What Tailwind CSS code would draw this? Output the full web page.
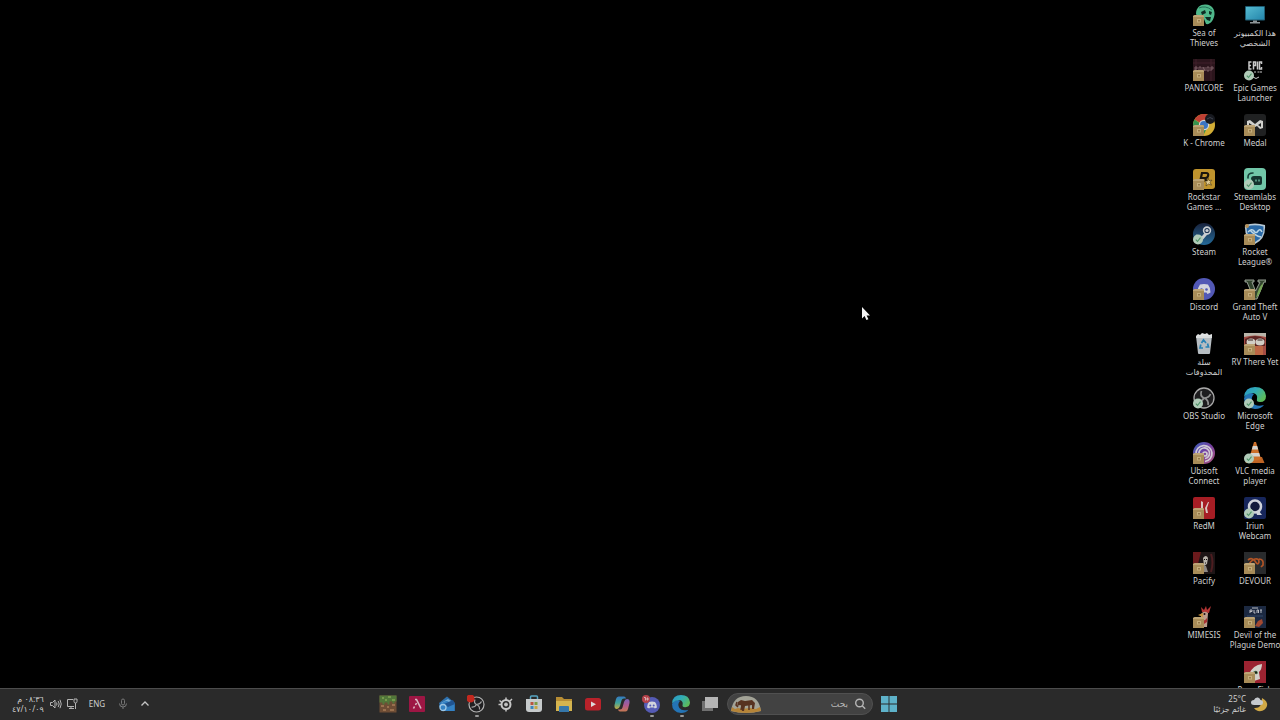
<!DOCTYPE html>
<html lang="en">
<head>
  <meta charset="UTF-8">
  <meta name="viewport" content="width=device-width, initial-scale=1.0">
  <title>Desktop</title>
  <script src="https://cdn.jsdelivr.net/npm/@tailwindcss/browser@4"></script>
</head>
<body class="bg-black text-[#cfcfcf] font-['Noto_Sans','DejaVu_Sans',sans-serif]">

  <!-- shared badges -->
  <svg class="hidden" aria-hidden="true">
    <symbol id="box" viewBox="0 0 22 22">
      <path d="M0 12l2-1h8l1 1v10H0z" fill="#a88c58"/>
      <path d="M0 12l2-1h8l1 1v1H0z" fill="#bda475"/>
      <rect x="4" y="15" width="4" height="3.500" fill="#c6af7c"/>
      <rect x="5" y="16" width="2" height="1.500" fill="#947748"/>
    </symbol>
    <symbol id="check" viewBox="0 0 22 22">
      <circle cx="5" cy="16.500" r="5" fill="#b0cbb8"/>
      <path d="M2.800 16.700l1.700 1.800 3-3.800" fill="none" stroke="#4d9468" stroke-width="1.100"/>
    </symbol>
  </svg>

  <div class="flex h-screen flex-col">
    <main class="relative flex min-h-0 flex-1 justify-end overflow-hidden">
      <!-- last row runs under the taskbar -->
      <div class="grid h-[calc(100%+24px)] shrink-0 grid-cols-[50px_50px] grid-rows-13 gap-x-px text-[8px] leading-[10px]">

        <button class="flex min-h-0 flex-col items-center gap-0.5 pt-1">
          <svg class="size-[22px] shrink-0" viewBox="0 0 22 22">
            <path d="M3 10C3 3 8 0 13 0.5c6 .5 9 5 8.500 10C21 16 17 21 13 20l-2-5-6-1z" fill="#4fb88a"/>
            <path d="M8 8l4-2 1 3-4 2zM16 7l3 1-1 3-2-1zM12 13l6 0-1 4-3-1z" fill="#0d2b22"/>
            <path d="M6 4q6-3 13 2" stroke="#237056" fill="none"/>
            <use href="#box"/>
          </svg>
          <span>Sea of<br>Thieves</span>
        </button>
        <button class="flex min-h-0 flex-col items-center gap-0.5 pt-1">
          <svg class="size-[22px] shrink-0" viewBox="0 0 22 22">
            <defs><linearGradient id="pc" x2="1" y2="1"><stop stop-color="#55bad0"/><stop offset="1" stop-color="#2486ac"/></linearGradient></defs>
            <rect x="1" y="2" width="20" height="14.500" rx="1" fill="#1f5d74"/>
            <rect x="2" y="3" width="18" height="12.500" fill="url(#pc)"/>
            <path d="M9 16.500h4V18h3v1.500H6V18h3z" fill="#8d9496"/>
          </svg>
          <span dir="rtl" class="whitespace-nowrap">هذا الكمبيوتر<br>الشخصي</span>
        </button>

        <button class="flex min-h-0 flex-col items-center gap-0.5 pt-1">
          <svg class="size-[22px] shrink-0" viewBox="0 0 22 22">
            <rect width="22" height="22" fill="#2b151c"/>
            <path d="M0 4h22M3 0v22M18 0v22" stroke="#41202a"/>
            <path d="M2 12V8h2v2H2M6 12V8h2v4M10 12V8l2 4V8M14 8h2v4h-2zM18 12V8h2v2h-2" stroke="#8c6d73" fill="none" stroke-width=".8"/>
            <use href="#box"/>
          </svg>
          <span>PANICORE</span>
        </button>
        <button class="flex min-h-0 flex-col items-center gap-0.5 pt-1">
          <svg class="size-[22px] shrink-0" viewBox="0 0 22 22">
            <g fill="none" stroke="#c9c9c9" stroke-width="1.500">
              <path d="M7.500 3H5v7h2.500M5 6.500h2M9.500 10.500V3h2v3.500h-2M13.500 2.500v8M17.500 5V3h-2v7h2V8"/>
              <path d="M10 13h2M13.500 13h2M16 13h2" stroke-width="1.200"/>
              <path d="M9 18l3 1.500 3-1.500" stroke-width="1"/>
            </g>
            <use href="#check"/>
          </svg>
          <span>Epic Games<br>Launcher</span>
        </button>

        <button class="flex min-h-0 flex-col items-center gap-0.5 pt-1">
          <svg class="size-[22px] shrink-0" viewBox="0 0 22 22">
            <circle cx="11" cy="11" r="11" fill="#d2ad35"/>
            <path d="M11 11L1.500 5.500A11 11 0 0 1 20.500 5.500z" fill="#bf4034"/>
            <path d="M1.500 5.500A11 11 0 0 0 10 22l4-8z" fill="#36924e"/>
            <circle cx="11" cy="11" r="5.200" fill="#d5d5d5"/>
            <circle cx="11" cy="11" r="4" fill="#3c75c3"/>
            <circle cx="17" cy="5" r="5" fill="#17191f"/>
            <path d="M14 5q3-3 6 0" stroke="#3e434e" fill="none"/>
            <use href="#box"/>
          </svg>
          <span class="whitespace-nowrap">K - Chrome</span>
        </button>
        <button class="flex min-h-0 flex-col items-center gap-0.5 pt-1">
          <svg class="size-[22px] shrink-0" viewBox="0 0 22 22">
            <rect width="22" height="22" rx="3" fill="#202122"/>
            <path d="M3 7l3-1 5 4 5-4 3 1v7l-3 1-3-3-2 1-2-1-3 3-3-1z" fill="#d0d0cc"/>
            <path d="M5 9l3 2-3 2zM17 9l-3 2 3 2z" fill="#202122"/>
            <use href="#box"/>
          </svg>
          <span>Medal</span>
        </button>

        <button class="flex min-h-0 flex-col items-center gap-0.5 pt-1">
          <svg class="size-[22px] shrink-0" viewBox="0 0 22 22">
            <rect y="1" width="22" height="20" rx="3" fill="#c0942d"/>
            <path d="M7 14L9 5h4q3 0 2 3-.5 2-3 2 1 1 1 4M8 10h4" fill="none" stroke="#19150d" stroke-width="2.200"/>
            <path d="M15 10l1 2.500 3-.3-2 2 1.500 3-3-1.200-2.500 2 .5-3-2-2h3z" fill="#dfcb94" stroke="#44330d" stroke-width=".6"/>
            <use href="#box"/>
          </svg>
          <span class="whitespace-nowrap">Rockstar<br>Games ...</span>
        </button>
        <button class="flex min-h-0 flex-col items-center gap-0.5 pt-1">
          <svg class="size-[22px] shrink-0" viewBox="0 0 22 22">
            <rect width="22" height="22" rx="4" fill="#71c6a8"/>
            <path d="M4 10V9q0-4 5-4" fill="none" stroke="#153e36" stroke-width="1.600" stroke-linecap="round"/>
            <path d="M7 11q0-3 3-3h6q2 0 2 2v5q0 2-2 2h-6q-2 0-2-2l1-1z" fill="#14332e"/>
            <path d="M12 11.500v2M15 11.500v2" stroke="#71c6a8" stroke-width="1.300"/>
            <use href="#check"/>
          </svg>
          <span>Streamlabs<br>Desktop</span>
        </button>

        <button class="flex min-h-0 flex-col items-center gap-0.5 pt-1">
          <svg class="size-[22px] shrink-0" viewBox="0 0 22 22">
            <defs><linearGradient id="st" x2="0" y2="1"><stop stop-color="#18223c"/><stop offset="1" stop-color="#246a98"/></linearGradient></defs>
            <circle cx="11" cy="11" r="11" fill="url(#st)"/>
            <path d="M3 13l6 2.500 5-6" stroke="#c9ced1" stroke-width="3" fill="none"/>
            <circle cx="14" cy="7.500" r="3.400" fill="#1c3454" stroke="#c9ced1" stroke-width="1.600"/>
            <circle cx="14" cy="7.500" r="1.600" fill="#c9ced1"/>
            <use href="#check"/>
          </svg>
          <span>Steam</span>
        </button>
        <button class="flex min-h-0 flex-col items-center gap-0.5 pt-1">
          <svg class="size-[22px] shrink-0" viewBox="0 0 22 22">
            <path d="M1 2q10-3 20 0 1 14-10 19Q0 16 1 2z" fill="#b7c9d5"/>
            <path d="M2.500 3.500q8.500-2.500 17 0 1 11-8.500 15.500Q2 14 2.500 3.500z" fill="#2a69a6"/>
            <path d="M4 9q4-4 6-1t4 0 4 1M6 7q5 6 11 7" stroke="#bcd7e5" fill="none" stroke-width="1.500"/>
            <circle cx="3" cy="3" r="2" fill="#b7935b"/>
            <use href="#box"/>
          </svg>
          <span>Rocket<br>League®</span>
        </button>

        <button class="flex min-h-0 flex-col items-center gap-0.5 pt-1">
          <svg class="size-[22px] shrink-0" viewBox="0 0 22 22">
            <circle cx="11" cy="11" r="11" fill="#5258b5"/>
            <path d="M7 6.500q4-1 8 0 2.500 3 2.500 8l-3 1.500-1-1.500h-5L7.500 16l-3-1.500q0-5 2.500-8z" fill="#d3d4de"/>
            <circle cx="8.500" cy="11.500" r="1.300" fill="#5258b5"/><circle cx="13.500" cy="11.500" r="1.300" fill="#5258b5"/>
            <use href="#box"/>
          </svg>
          <span>Discord</span>
        </button>
        <button class="flex min-h-0 flex-col items-center gap-0.5 pt-1">
          <svg class="size-[22px] shrink-0" viewBox="0 0 22 22">
            <path d="M1 2h9v2H8l3.500 9L16 4h-2V2h8v2h-2l-7 17h-3L3 4H1z" fill="#33452f" stroke="#a4ada1" stroke-width=".9"/>
            <path d="M12 20q2-10 7-15-1 9-7 15zM9 17q-1-5-4-8" fill="#77a654"/>
            <use href="#box"/>
          </svg>
          <span class="whitespace-nowrap">Grand Theft<br>Auto V</span>
        </button>

        <button class="flex min-h-0 flex-col items-center gap-0.5 pt-1">
          <svg class="size-[22px] shrink-0" viewBox="0 0 22 22">
            <path d="M3 3l2-2 2 1 2-2 3 1 2-1 2 2 3-1v3z" fill="#e0e2e3"/>
            <path d="M3 3h16l-2 17q0 1-1 1H6q-1 0-1-1z" fill="#b6bdc2"/>
            <path d="M3 3h16v2H3z" fill="#d9dcdd"/>
            <g fill="none" stroke="#2782b5" stroke-width="1.700"><path d="M8.500 10l2-3 2.500 3M14.500 10.500l1 3.500h-3M10 15H7l.8-3.500"/></g>
          </svg>
          <span dir="rtl" class="whitespace-nowrap">سلة<br>المحذوفات</span>
        </button>
        <button class="flex min-h-0 flex-col items-center gap-0.5 pt-1">
          <svg class="size-[22px] shrink-0" viewBox="0 0 22 22">
            <rect width="22" height="22" fill="#a34b42"/>
            <path d="M0 0h22v4q-11-3-22 0z" fill="#b9b5aa"/>
            <path d="M1 6q10-6 20 0v7H1z" fill="#5c2422"/>
            <ellipse cx="7" cy="9" rx="4.500" ry="3.500" fill="#d1cec5"/><ellipse cx="16" cy="9" rx="4.500" ry="3.500" fill="#d1cec5"/>
            <path d="M4 7h5M13.500 7h5" stroke="#35201e" stroke-width="1"/>
            <path d="M10 13h9v9h-9z" fill="#bd6644"/>
            <use href="#box"/>
          </svg>
          <span class="whitespace-nowrap">RV There Yet</span>
        </button>

        <button class="flex min-h-0 flex-col items-center gap-0.5 pt-1">
          <svg class="size-[22px] shrink-0" viewBox="0 0 22 22">
            <circle cx="11" cy="11" r="10" fill="#1e1d1f" stroke="#a9a9a9" stroke-width="1.300"/>
            <path d="M8.500 4q-2 5 2.500 7 5 0 6.500-4M11 11q5 2 4 7M11 11q-2 4-7 3" stroke="#8f8f8f" stroke-width="1.700" fill="none"/>
            <use href="#check"/>
          </svg>
          <span class="whitespace-nowrap">OBS Studio</span>
        </button>
        <button class="flex min-h-0 flex-col items-center gap-0.5 pt-1">
          <svg class="size-[22px] shrink-0" viewBox="0 0 22 22">
            <defs><linearGradient id="ed" x2="1" y2=".6"><stop stop-color="#2b94c9"/><stop offset=".5" stop-color="#31adb5"/><stop offset="1" stop-color="#5dbb59"/></linearGradient></defs>
            <path d="M0 11Q4 4 10 7q-4 4-1 9 3 4 11 2-3 4-9 4Q0 21 0 11z" fill="#2474b5"/>
            <path d="M0 10Q1 0 11 0q10 0 11 9 0 6-6 6-4 0-3-3 1-5-4-6-5 0-9 4z" fill="url(#ed)"/>
            <use href="#check"/>
          </svg>
          <span>Microsoft<br>Edge</span>
        </button>

        <button class="flex min-h-0 flex-col items-center gap-0.5 pt-1">
          <svg class="size-[22px] shrink-0" viewBox="0 0 22 22">
            <defs><linearGradient id="ub" x2="1" y2="1"><stop stop-color="#3d64bd"/><stop offset=".5" stop-color="#7540a0"/><stop offset="1" stop-color="#b45b7d"/></linearGradient></defs>
            <circle cx="11" cy="11" r="11" fill="url(#ub)"/>
            <g fill="none" stroke="#d0cbd5" stroke-width="1.700"><path d="M3 12a8 8 0 1 1 9 7.500"/><path d="M6 12a5.300 5.300 0 1 1 6 4.500"/><circle cx="12" cy="12" r="2"/></g>
            <use href="#box"/>
          </svg>
          <span>Ubisoft<br>Connect</span>
        </button>
        <button class="flex min-h-0 flex-col items-center gap-0.5 pt-1">
          <svg class="size-[22px] shrink-0" viewBox="0 0 22 22">
            <path d="M4 15h14l2.500 6h-19z" fill="#bf6424"/>
            <path d="M10 0h2l5 17q-6 3-12 0z" fill="#cc702b"/>
            <path d="M8.800 4h4.400l1 3.500H7.800zM6.800 11h8.400l1 3.500H5.800z" fill="#d5d3cf"/>
            <use href="#check"/>
          </svg>
          <span class="whitespace-nowrap">VLC media<br>player</span>
        </button>

        <button class="flex min-h-0 flex-col items-center gap-0.5 pt-1">
          <svg class="size-[22px] shrink-0" viewBox="0 0 22 22">
            <rect width="22" height="22" rx="2" fill="#a61d24"/>
            <path d="M8 4l2 1v6H8zM12 11l3-6h1l-2 6 1 5h-2zM8 13l2 1v3H8z" fill="#d9c6c3"/>
            <use href="#box"/>
          </svg>
          <span>RedM</span>
        </button>
        <button class="flex min-h-0 flex-col items-center gap-0.5 pt-1">
          <svg class="size-[22px] shrink-0" viewBox="0 0 22 22">
            <rect width="22" height="22" rx="2" fill="#17265b"/>
            <circle cx="11" cy="9.500" r="6" fill="#131a3c" stroke="#cfd2da" stroke-width="2.500"/>
            <path d="M12 15l3-1 3 4h-5z" fill="#cfd2da"/>
            <use href="#check"/>
          </svg>
          <span>Iriun<br>Webcam</span>
        </button>

        <button class="flex min-h-0 flex-col items-center gap-0.5 pt-1">
          <svg class="size-[22px] shrink-0" viewBox="0 0 22 22">
            <rect width="22" height="22" fill="#1d1516"/>
            <path d="M0 0h8L5 12H0z" fill="#6b1a1c"/>
            <path d="M10 6q3-4 5 0l-1 6-3 2z" fill="#b9b3ab"/>
            <path d="M8 12l5 2 2 6h-5z" fill="#8d8783"/>
            <path d="M11 7.500h1M13 7.500h1M12 11h1" stroke="#120d0d"/>
            <path d="M18 2q3 8 0 18" stroke="#4d1d20" stroke-width="2" fill="none"/>
            <use href="#box"/>
          </svg>
          <span>Pacify</span>
        </button>
        <button class="flex min-h-0 flex-col items-center gap-0.5 pt-1">
          <svg class="size-[22px] shrink-0" viewBox="0 0 22 22">
            <rect width="22" height="22" fill="#292b2d"/>
            <path d="M4 8q4-3 7 1 3 5 4 1 0-4-4-3-5 2-6 6M15 7q5 0 4 6l-2 2" fill="none" stroke="#b35425" stroke-width="1.700"/>
            <use href="#box"/>
          </svg>
          <span>DEVOUR</span>
        </button>

        <button class="flex min-h-0 flex-col items-center gap-0.5 pt-1">
          <svg class="size-[22px] shrink-0" viewBox="0 0 22 22">
            <path d="M9 6L8 1l3 3 2-4 1 4 4-4-2 7z" fill="#b73635"/>
            <path d="M8 8q3-4 7-1l-1 14H8z" fill="#bd9c8c"/>
            <path d="M5 9l5-2v4z" fill="#c9933e"/>
            <path d="M8 12q2 5 6 0v4l-3 2z" fill="#a83232"/>
            <circle cx="11.500" cy="8" r="1" fill="#181010"/>
            <use href="#box"/>
          </svg>
          <span>MIMESIS</span>
        </button>
        <button class="flex min-h-0 flex-col items-center gap-0.5 pt-1">
          <svg class="size-[22px] shrink-0" viewBox="0 0 22 22">
            <rect width="22" height="22" fill="#1c2941"/>
            <path d="M8 2h6M6 7V4h2v1.500H6M10 4v3h1.500M13 7V4l1.500 0v3M16 4h2M17 4v3" stroke="#b9bdc4" fill="none" stroke-width="1"/>
            <path d="M11 20l3-5 4-2 1 4-4 4z" fill="#a34931"/>
            <path d="M3 10h16" stroke="#334869"/>
            <use href="#box"/>
          </svg>
          <span class="whitespace-nowrap">Devil of the<br>Plague Demo</span>
        </button>

        <button class="col-start-2 flex min-h-0 flex-col items-center gap-0.5 pt-1">
          <svg class="size-[22px] shrink-0" viewBox="0 0 22 22">
            <rect width="22" height="22" fill="#9b2331"/>
            <path d="M5 13Q9 4 18 3q0 5-3 8l1 7-6 2z" fill="#d2cfc8"/>
            <path d="M9 11q4-3 5 1-2 3-5-1z" fill="#487049"/>
            <circle cx="12" cy="11.500" r="1" fill="#151515"/>
            <use href="#box"/>
          </svg>
          <span>Poor Fish</span>
        </button>
      </div>

      <!-- mouse pointer -->
      <svg class="absolute left-[861px] top-[306px] h-4 w-2.5" viewBox="0 0 10 16" aria-hidden="true">
        <path d="M1 1v11.500l2.600-2.400 1.800 4 2-.9-1.800-3.800H9z" fill="#f4f4f4"/>
      </svg>
    </main>

    <footer class="relative flex h-8 shrink-0 items-center justify-between border-t border-[#4c4c4c] bg-[#2a2a2a] px-3 pb-0.5">
      <div class="flex items-center text-[8px]">
        <button dir="rtl" class="text-right text-[8px] leading-[10px] whitespace-nowrap">٠٨:٣٦ م<br>٤٧/١٠/٠٩</button>
        <button class="ml-1.5 flex items-center gap-1" aria-label="Volume and network">
          <svg class="size-3" viewBox="0 0 12 12" fill="none" stroke="#b5b5b5">
            <path d="M.5 4.500h2L5 2v8L2.500 7.500h-2zM6.500 4.500q1 1.500 0 3M8.200 3q2 3 0 6M10 1.800q2.500 4.200 0 8.400"/>
          </svg>
          <svg class="size-3" viewBox="0 0 12 12" fill="none" stroke="#b5b5b5">
            <path d="M7 1.500H1.500v7H8M3 10.500h5M9.500 5v6M8 1v2.500q0 1.500 1.500 1.500T11 3.500V1zM5 8.500v2"/>
          </svg>
        </button>
        <button class="ml-[11px]" aria-label="Input language">ENG</button>
        <button class="ml-3" aria-label="Microphone">
          <svg class="size-3" viewBox="0 0 12 12" fill="none" stroke="#777">
            <rect x="4.500" y="1" width="3" height="6" rx="1.500"/><path d="M2.500 5.500q0 3.500 3.500 3.500t3.500-3.500M6 9v2"/>
          </svg>
        </button>
        <button class="ml-2.5" aria-label="Show hidden icons">
          <svg class="size-3" viewBox="0 0 12 12" fill="none" stroke="#c5c5c5" stroke-width="1.300"><path d="M2.500 7.500L6 4l3.500 3.500"/></svg>
        </button>
      </div>

      <!-- centred apps, search and start -->
      <nav class="absolute inset-0 m-auto flex w-fit items-center gap-2 pr-1 pb-0.5">
        <div class="flex w-[340px] items-center justify-between">
          <button aria-label="Minecraft">
            <svg class="size-[18px]" viewBox="0 0 18 18">
              <rect x=".5" y=".5" width="17" height="17" fill="#6e4d35"/>
              <path d="M.5.5h17v6h-2v2h-2v-2h-3v3h-2v-2h-3v2h-2v-2h-3z" fill="#51773a"/>
              <path d="M3 2h2v2H3zM9 1h3v2H9zM13 4h3v2h-3zM6 4h2v2H6z" fill="#759a4c"/>
              <path d="M2 10h3v2H2zM8 11h2v2H8zM13 9h3v2h-3zM4 14h3v2H4zM11 14h4v2h-4z" fill="#99704e"/>
            </svg>
          </button>
          <button aria-label="Alight">
            <svg class="size-[18px]" viewBox="0 0 18 18">
              <rect x="1" y="1" width="16" height="16" rx="1" fill="#9d1644"/>
              <path d="M7 4.500h1.500l4.500 9M8.500 8L7.500 10M6.500 11.500l-1 2" fill="none" stroke="#dab8c3" stroke-width="1.600"/>
            </svg>
          </button>
          <button aria-label="Mail">
            <svg class="size-[18px]" viewBox="0 0 18 18">
              <path d="M1 8l8-6.500L17 8v8H3z" fill="#2d70ad"/>
              <path d="M3 8l7-4 6 4-7 6z" fill="#79b0d9"/>
              <path d="M1 11q6-7 10-4l5 1v8H4z" fill="#3482c4"/>
              <path d="M6 9l9-4 2 4-7 3z" fill="#205491"/>
              <circle cx="5" cy="12.500" r="3" fill="none" stroke="#9fc7e5" stroke-width="1.300"/>
            </svg>
          </button>
          <button class="relative" aria-label="OBS Studio">
            <svg class="size-[18px]" viewBox="0 0 18 18">
              <circle cx="9.500" cy="9.500" r="7.500" fill="#202022" stroke="#b3b3b3" stroke-width="1.200"/>
              <path d="M8 4.500q-1.500 3.500 1.500 5 3.500 0 5-3M9.500 9.500q3.500 1.500 3 5M9.500 9.500q-1.500 3-5 2.500" fill="none" stroke="#a5a5a5" stroke-width="1.200"/>
              <circle cx="3.500" cy="3.500" r="4" fill="#c3281e"/>
            </svg>
            <span class="absolute -bottom-1 left-2 h-0.5 w-1 rounded bg-[#999999]"></span>
          </button>
          <button aria-label="SteelSeries">
            <svg class="size-[18px]" viewBox="0 0 18 18" fill="none" stroke="#c5c5c5">
              <circle cx="10" cy="9.500" r="4.500" stroke-width="2"/><circle cx="10" cy="9.500" r="1.500" fill="#c5c5c5"/>
              <path d="M10 2.500v3M10 14v2.500M2.500 9.500H6M3.500 5.500l2.500 2M14 6l2-2" stroke-width="1.500"/>
            </svg>
          </button>
          <button aria-label="Microsoft Store">
            <svg class="size-[18px]" viewBox="0 0 18 18">
              <path d="M5.500 5V2q0-1 1-1h5q1 0 1 1v3" fill="none" stroke="#57a6c4" stroke-width="1.500"/>
              <path d="M1 4h16v10q0 3-3 3H4q-3 0-3-3z" fill="#c6cacb"/>
              <path d="M5.500 7h3v3h-3z" fill="#b85440"/><path d="M9.500 7h3v3h-3z" fill="#7b9c46"/>
              <path d="M5.500 11h3v3h-3z" fill="#3d86b9"/><path d="M9.500 11h3v3h-3z" fill="#c8a544"/>
            </svg>
          </button>
          <button aria-label="File Explorer">
            <svg class="size-[18px]" viewBox="0 0 18 18">
              <path d="M1 2h6l2 2h8v12H1z" fill="#b78d34"/><path d="M1 6h16v10H1z" fill="#d4b44f"/>
              <path d="M4 12q0-1 1-1h8q1 0 1 1v5H4z" fill="#3677aa"/>
            </svg>
          </button>
          <button aria-label="YouTube">
            <svg class="size-[18px]" viewBox="0 0 18 18">
              <rect x="1" y="3" width="16" height="12.500" rx="2.500" fill="#b8222a"/><path d="M7 6.500l5 2.800-5 2.800z" fill="#dedada"/>
            </svg>
          </button>
          <button aria-label="Copilot">
            <svg class="size-[18px]" viewBox="0 0 18 18">
              <defs>
                <linearGradient id="cl" x2="0" y2="1"><stop stop-color="#3479c0"/><stop offset=".5" stop-color="#3ea29b"/><stop offset="1" stop-color="#c5aa3f"/></linearGradient>
                <linearGradient id="cr" x2="0" y2="1"><stop stop-color="#7763b9"/><stop offset=".5" stop-color="#ad5a91"/><stop offset="1" stop-color="#c57851"/></linearGradient>
              </defs>
              <path d="M5.500 1.500H11q1.500 0 2 2H11q-2 0-2.500 2L7 11q-1 3-3 3-3 0-2.500-4L3 4q.6-2.500 2.500-2.500z" fill="url(#cl)"/>
              <path d="M12.500 16.500H7q-1.500 0-2-2h2q2 0 2.500-2L11 7q1-3 3-3 3 0 2.500 4L15 14q-.6 2.500-2.500 2.500z" fill="url(#cr)"/>
            </svg>
          </button>
          <button class="relative" aria-label="Discord">
            <svg class="size-[18px]" viewBox="0 0 18 18">
              <circle cx="10" cy="10" r="8" fill="#555bb5"/>
              <path d="M7 7q3-1 6 0 2 2 2 5.500l-2.200 1-.8-1H8l-.8 1-2.200-1Q5 9 7 7z" fill="#d2d3dd"/>
              <circle cx="8.300" cy="10.500" r="1" fill="#555bb5"/><circle cx="11.700" cy="10.500" r="1" fill="#555bb5"/>
              <circle cx="4" cy="4" r="4" fill="#b5424a"/>
              <path d="M2 2.500h1.500v3M5 3h1v2H5z" fill="none" stroke="#dec9ca" stroke-width=".8"/>
            </svg>
            <span class="absolute -bottom-1 left-2 h-0.5 w-1 rounded bg-[#999999]"></span>
          </button>
          <button class="relative" aria-label="Microsoft Edge">
            <svg class="size-[18px]" viewBox="0 0 22 22">
              <path d="M0 11Q4 4 10 7q-4 4-1 9 3 4 11 2-3 4-9 4Q0 21 0 11z" fill="#2474b5"/>
              <path d="M0 10Q1 0 11 0q10 0 11 9 0 6-6 6-4 0-3-3 1-5-4-6-5 0-9 4z" fill="url(#ed)"/>
            </svg>
            <span class="absolute -bottom-1 left-2 h-0.5 w-1 rounded bg-[#999999]"></span>
          </button>
          <button aria-label="Task view">
            <svg class="size-[18px]" viewBox="0 0 18 18">
              <path d="M1 6h11v10H1z" fill="#707070"/><path d="M4 2h13v11H4z" fill="#b5b5b5"/>
            </svg>
          </button>
        </div>

        <label class="flex h-[22px] w-[146px] items-center gap-1.5 rounded-full border border-[#505050] bg-[#424242] pr-1.5 pl-0.5">
          <svg class="h-5 w-8 shrink-0" viewBox="0 0 32 20">
            <path d="M1 17Q3 2 16 2t15 15q-15 4-30 0z" fill="#a3a397"/>
            <path d="M2 13l3 2 3-1 4 1 8-1 6 1 4-2 1 4q-15 4-30 0z" fill="#b58438"/>
            <path d="M8 8l3-2 4 1 7-1 3 3-1 6h-2v-4l-7 1-1 5h-2v-5l-2-1-3 1z" fill="#573220"/>
            <path d="M7 8l-1 3 2 2M12 11l-1 5M19 11v5" stroke="#573220" stroke-width="1.500" fill="none"/>
          </svg>
          <input type="text" dir="rtl" placeholder="بحث" aria-label="بحث" class="h-4 min-w-0 flex-1 bg-transparent text-[9px] placeholder:text-[#b5b5b5]">
          <svg class="size-3 shrink-0" viewBox="0 0 12 12" fill="none" stroke="#b5b5b5" stroke-width="1.400">
            <circle cx="5.500" cy="5" r="3.800"/><path d="M8.200 7.800l3 3"/>
          </svg>
        </label>

        <button aria-label="Start">
          <svg class="size-4" viewBox="0 0 17 17" fill="#5eb2c9">
            <path d="M0 0h8v8H0zM9 0h8v8H9zM0 9h8v8H0zM9 9h8v8H9z"/>
          </svg>
        </button>
      </nav>

      <button class="flex items-center gap-1 text-right text-[8px] leading-[10px] whitespace-nowrap">
        <span><span>25°C</span><br><span dir="rtl">غائم جزئيًا</span></span>
        <svg class="size-[18px]" viewBox="0 0 18 18">
          <path d="M12 3q6 3 5 8-2 6-9 5-3-1-4-3 8 1 8-10z" fill="#d1a946"/>
          <path d="M4 10q-3 0-3-2.500T4 5q1-3 4-2.500Q10 3 10.500 5 13 5 13 7.500T10.500 10z" fill="#c5c9cd"/>
        </svg>
      </button>
    </footer>
  </div>
</body>
</html>
